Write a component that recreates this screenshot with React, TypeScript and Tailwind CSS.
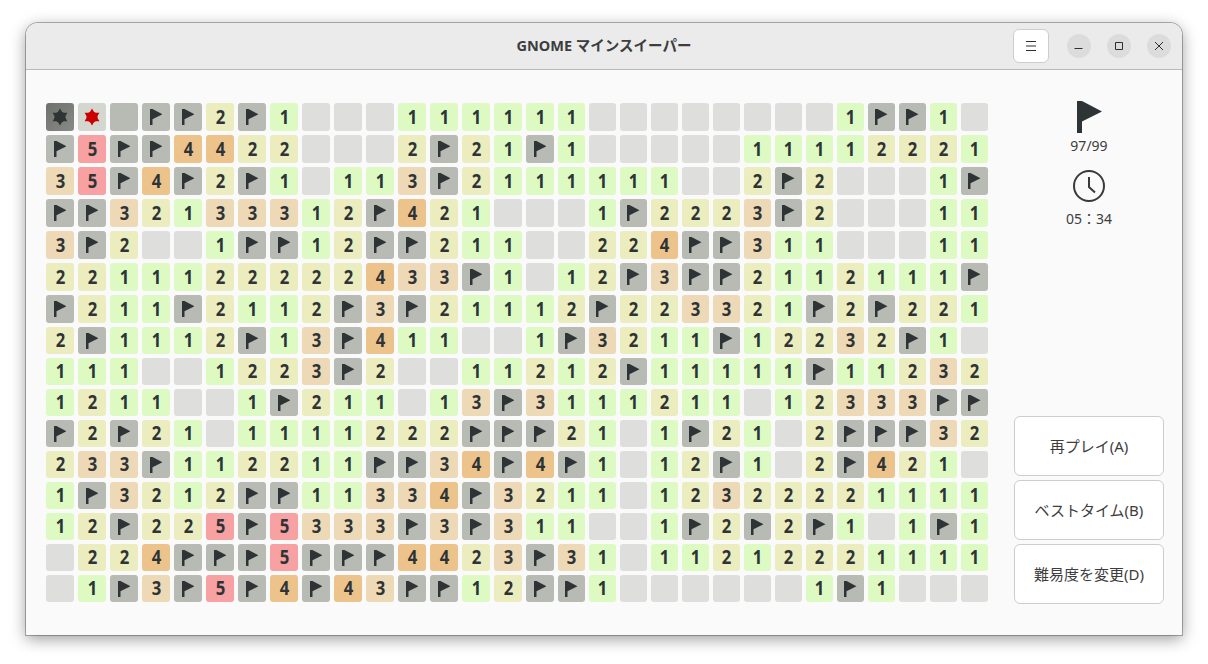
import type { ReactNode } from "react";

const BOARD = [
  "MXGFF2F1...111111........1FF1.",
  "F5FF4422...2F21F1.....11112221",
  "35F4F2F1.113F2111111..2F2...1F",
  "FF32133312F421...1F2223F2...11",
  "3F2..1FF12FF211..224FF311...11",
  "221112222243" + "3F1.12F3FF2112111F",
  "F211F2112F3F211" + "12F223321F2F221",
  "2F1112F13F411.." + "1F3211F12232F1.",
  "111..1223F2..11" + "212F11111F11232",
  "1211..1F211.13F" + "3111211.12333FF",
  "F2F21.1111222FF" + "F21.1F21.2FFF32",
  "233F112211FF34F" + "4F1.12F1.2F421.",
  "1F3212FF11334F3" + "211.12322221111",
  "12F225F5333F3F3" + "11..1F2F2F1.1F1",
  ".224FFF5FFF4423" + "F31.11212221111",
  ".1F3F5F4F43FF12" + "FF1......1F1...",
];

const cellBg: Record<string, string> = {
  ".": "bg-[#dededc]",
  "1": "bg-[#ddfac3]",
  "2": "bg-[#ecedbf]",
  "3": "bg-[#edd9b5]",
  "4": "bg-[#edc38c]",
  "5": "bg-[#f7a1a2]",
  F: "bg-[#b8bab4]",
  G: "bg-[#b8bab4]",
  M: "bg-gradient-to-br from-[#6f716c] to-[#888a85]",
  X: "bg-[#d3d7cf]",
};

const FlagIcon = ({ className }: { className: string }) => (
  <svg viewBox="0 0 25 32" className={className} fill="currentColor">
    <path d="M0 0h5l20 10.5L5 20.5V32H0z" />
  </svg>
);

const MineIcon = ({ className }: { className: string }) => (
  <svg viewBox="0 0 18 18" className={className} fill="currentColor">
    <circle cx="9" cy="9" r="5.5" />
    <path d="M9 .5 16.400 13.200H1.600zM9 17.500 1.600 4.800h14.800z" />
  </svg>
);

const Cell = ({ value }: { value: string }) => {
  return (
    <div
      className={`flex items-center justify-center rounded-[3px] text-[#2e3436] ${cellBg[value]}`}
    >
      {value === "F" && <FlagIcon className="h-[16px] w-[12.500px]" />}
      {value === "M" && <MineIcon className="h-[18px] w-[18px]" />}
      {value === "X" && (
        <MineIcon className="h-[18px] w-[18px] text-[#cc0000]" />
      )}
      {/[1-5]/.test(value) && (
        <span className="scale-x-[0.88] text-[19px] leading-none font-bold">
          {value}
        </span>
      )}
    </div>
  );
};

const PanelButton = ({ text }: { text: string }) => (
  <button
    type="button"
    className="h-[60px] w-[150px] rounded-[6px] border border-[#cdcdcd] bg-white text-[15px] text-[#3d3d3d]"
  >
    {text}
  </button>
);

const WindowButton = ({ children }: { children: ReactNode }) => (
  <div className="flex h-6 w-6 items-center justify-center rounded-full bg-[#dcdcdc] text-[#2e2e2e]">
    {children}
  </div>
);

const App = () => {
  return (
    <div className="h-[664px] w-[1208px] overflow-hidden bg-white pt-[23px] pl-[26px] font-['Noto_Sans','Noto_Sans_CJK_JP',sans-serif]">
      <div className="flex h-[612px] w-[1156px] flex-col rounded-t-[12px] bg-[#fafafa] shadow-[0_0_0_1px_rgba(0,0,0,0.28),0_4px_16px_rgba(0,0,0,0.4)]">
        <header className="relative flex h-[47px] shrink-0 items-center justify-end rounded-t-[12px] border-b border-[#b9b9b9] bg-[#ebebeb] pr-[11px]">
          <h1 className="absolute inset-x-0 text-center text-[14.500px] font-bold text-[#3d3d3d]">
            GNOME マインスイーパー
          </h1>
          <div className="relative mr-[18px] flex h-[34px] w-[36px] items-center justify-center rounded-[6px] border border-[#cdcdcd] bg-white">
            <svg viewBox="0 0 12 12" className="h-3 w-3" fill="none" stroke="#2e2e2e">
              <path d="M1 1.500h10M1 6h10M1 10.500h10" />
            </svg>
          </div>
          <div className="relative flex gap-4">
            <WindowButton>
              <svg viewBox="0 0 16 16" className="h-4 w-4" fill="none" stroke="currentColor">
                <path d="M3.500 10.500h8" />
              </svg>
            </WindowButton>
            <WindowButton>
              <svg viewBox="0 0 16 16" className="h-4 w-4" fill="none" stroke="currentColor">
                <path d="M4.500 4.500h7v7h-7z" />
              </svg>
            </WindowButton>
            <WindowButton>
              <svg viewBox="0 0 16 16" className="h-4 w-4" fill="none" stroke="currentColor">
                <path d="m4 4 8 8M12 4l-8 8" />
              </svg>
            </WindowButton>
          </div>
        </header>
        <main className="flex flex-1 py-[31px] pl-[20px]">
          <div className="mt-[2px] grid h-[499px] grid-cols-[repeat(16,28px)_repeat(14,27px)] grid-rows-[repeat(7,28px)_repeat(9,27px)] gap-1">
            {BOARD.flatMap((row, y) =>
              row
                .split("")
                .map((value, x) => <Cell key={`${y}-${x}`} value={value} />),
            )}
          </div>
          <aside className="ml-[26px] flex w-[150px] flex-col items-center justify-between">
            <div className="flex flex-col items-center text-[14px] leading-[18px] text-[#3d3d3d]">
              <FlagIcon className="ml-[1px] h-[32px] w-[25px] text-[#2e3436]" />
              <p className="mt-[4px]">97/99</p>
              <svg
                viewBox="0 0 34 34"
                className="mt-[14px] h-[34px] w-[34px]"
                fill="none"
                stroke="#3a3a3a"
                strokeWidth="2"
              >
                <circle cx="17" cy="17" r="15" />
                <path d="M17 8v10l6 5.500" />
              </svg>
              <p className="mt-[7px]">05：34</p>
            </div>
            <div className="flex flex-col gap-1">
              <PanelButton text="再プレイ(A)" />
              <PanelButton text="ベストタイム(B)" />
              <PanelButton text="難易度を変更(D)" />
            </div>
          </aside>
        </main>
      </div>
    </div>
  );
};

export default App;
